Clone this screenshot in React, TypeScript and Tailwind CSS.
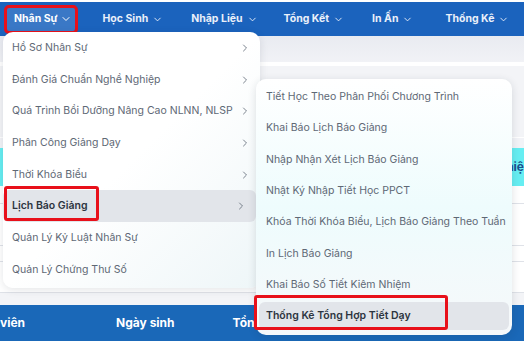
import React from "react";
import { ChevronDown, ChevronRight } from "lucide-react";

const navItems = ["Học Sinh", "Nhập Liệu", "Tổng Kết", "In Ấn", "Thống Kê"];
const navGaps = ["ml-[24px]", "ml-[28px]", "ml-[26px]", "ml-[28px]", "ml-[32px]"];

const mainMenu = [
  { label: "Hồ Sơ Nhân Sự", sub: true },
  { label: "Đánh Giá Chuẩn Nghề Nghiệp", sub: true },
  { label: "Quá Trình Bồi Dưỡng Nâng Cao NLNN, NLSP", sub: true },
  { label: "Phân Công Giảng Dạy", sub: true },
  { label: "Thời Khóa Biểu", sub: true },
  { label: "Lịch Báo Giảng", sub: true, active: true },
  { label: "Quản Lý Kỷ Luật Nhân Sự", sub: false },
  { label: "Quản Lý Chứng Thư Số", sub: false },
];

const subMenu = [
  "Tiết Học Theo Phân Phối Chương Trình",
  "Khai Báo Lịch Báo Giảng",
  "Nhập Nhận Xét Lịch Báo Giảng",
  "Nhật Ký Nhập Tiết Học PPCT",
  "Khóa Thời Khóa Biểu, Lịch Báo Giảng Theo Tuần",
  "In Lịch Báo Giảng",
  "Khai Báo Số Tiết Kiêm Nhiệm",
  "Thống Kê Tổng Hợp Tiết Dạy",
];

export default function App() {
  return (
    <div
      className="relative w-[524px] h-[341px] overflow-hidden bg-[#f2f3f7] whitespace-nowrap"
      style={{ fontFamily: "Inter, 'Noto Sans', sans-serif" }}
    >
      {/* Top nav */}
      <div className="h-[2px] bg-white" />
      <div className="h-[34px] bg-[#1b63bd] flex items-center pl-[4px]">
        <div className="h-[29px] flex items-center gap-[3px] pl-[7px] pr-[3px] rounded-[5px] border-[3px] border-[#e8101a] bg-[#3a78c6] text-white text-[10.5px] font-bold">
          Nhân Sự
          <ChevronDown size={12} strokeWidth={2} />
        </div>
        {navItems.map((n, i) => (
          <div
            key={n}
            className={"flex items-center gap-[4px] text-[10.5px] font-bold text-[#eaf0fa] " + navGaps[i]}
          >
            {n}
            <ChevronDown size={11} strokeWidth={2} />
          </div>
        ))}
      </div>

      {/* Page content behind */}
      <div className="flex flex-col">
        <div className="h-[26px] bg-gradient-to-b from-[#e9ebf1] to-[#f1f2f6]" />
        <div className="h-[4px] bg-white" />
        <div className="h-[72px] bg-[#f3f4f7] border-b border-white" />
        <div className="h-[10px]" />
        <div className="h-[38px] bg-[#66eef2] flex items-center justify-end">
          <span className="text-[12px] font-bold text-[#1c4f8f]">niệ</span>
        </div>
        <div className="h-[18px] border-b border-[#dfe2e8] bg-white" />
        <div className="h-[42px] border-b border-[#dfe2e8] bg-white" />
        <div className="h-[16px] border-b border-[#dfe2e8] bg-white" />
        <div className="h-[31px] border-b border-[#dfe2e8] bg-white" />
        <div className="h-[12px] bg-[#f3f4f7]" />
        <div className="h-[36px] bg-[#1a68b8] flex items-center text-white text-[12px] font-bold">
          <span>viên</span>
          <span className="ml-[91px]">Ngày sinh</span>
          <span className="ml-[58px]">Tổng</span>
        </div>
      </div>

      {/* Main dropdown */}
      <div className="absolute left-[3px] top-[32px] w-[257px] h-[256px] rounded-[10px] bg-gradient-to-br from-white via-white to-[#eef6f8] shadow-[0_2px_8px_rgba(30,40,60,0.12)] flex flex-col">
        {mainMenu.map((m) => (
          <div
            key={m.label}
            className={
              "relative h-[31.7px] flex items-center justify-between pl-[9px] pr-[9px] text-[10.5px] " +
              (m.active
                ? "bg-[#e2e5ea] rounded-[6px] mr-[4px] pr-[5px] font-semibold text-[#2c3440]"
                : "text-[#5e6875]")
            }
          >
            <span>{m.label}</span>
            {m.sub && <ChevronRight size={12} strokeWidth={1.8} className="text-[#6b7480]" />}
            {m.active && (
              <div className="absolute left-[1px] top-[-4px] w-[95px] h-[35px] border-[3px] border-[#e8101a] rounded-[3px]" />
            )}
          </div>
        ))}
      </div>

      {/* Sub dropdown */}
      <div className="absolute left-[256px] top-[79px] w-[256px] h-[256px] rounded-[10px] bg-gradient-to-b from-white via-[#eefcfd] to-[#f6f8fa] shadow-[0_2px_8px_rgba(30,40,60,0.14)] flex flex-col pt-[2px]">
        {subMenu.map((s, i) => {
          const active = i === subMenu.length - 1;
          return (
            <div
              key={s}
              className={
                "relative flex items-center text-[10.5px] " +
                (active
                  ? "mx-[3px] pl-[7px] bg-[#e2e5ea] rounded-[6px] font-semibold text-[#2c3440] h-[28px] mt-[1px]"
                  : "h-[31.4px] pl-[10px] text-[#5e6875]")
              }
            >
              <span>{s}</span>
              {active && (
                <div className="absolute left-[-5px] top-[-7px] w-[194px] h-[35px] border-[3px] border-[#e8101a] rounded-[3px]" />
              )}
            </div>
          );
        })}
      </div>
    </div>
  );
}
